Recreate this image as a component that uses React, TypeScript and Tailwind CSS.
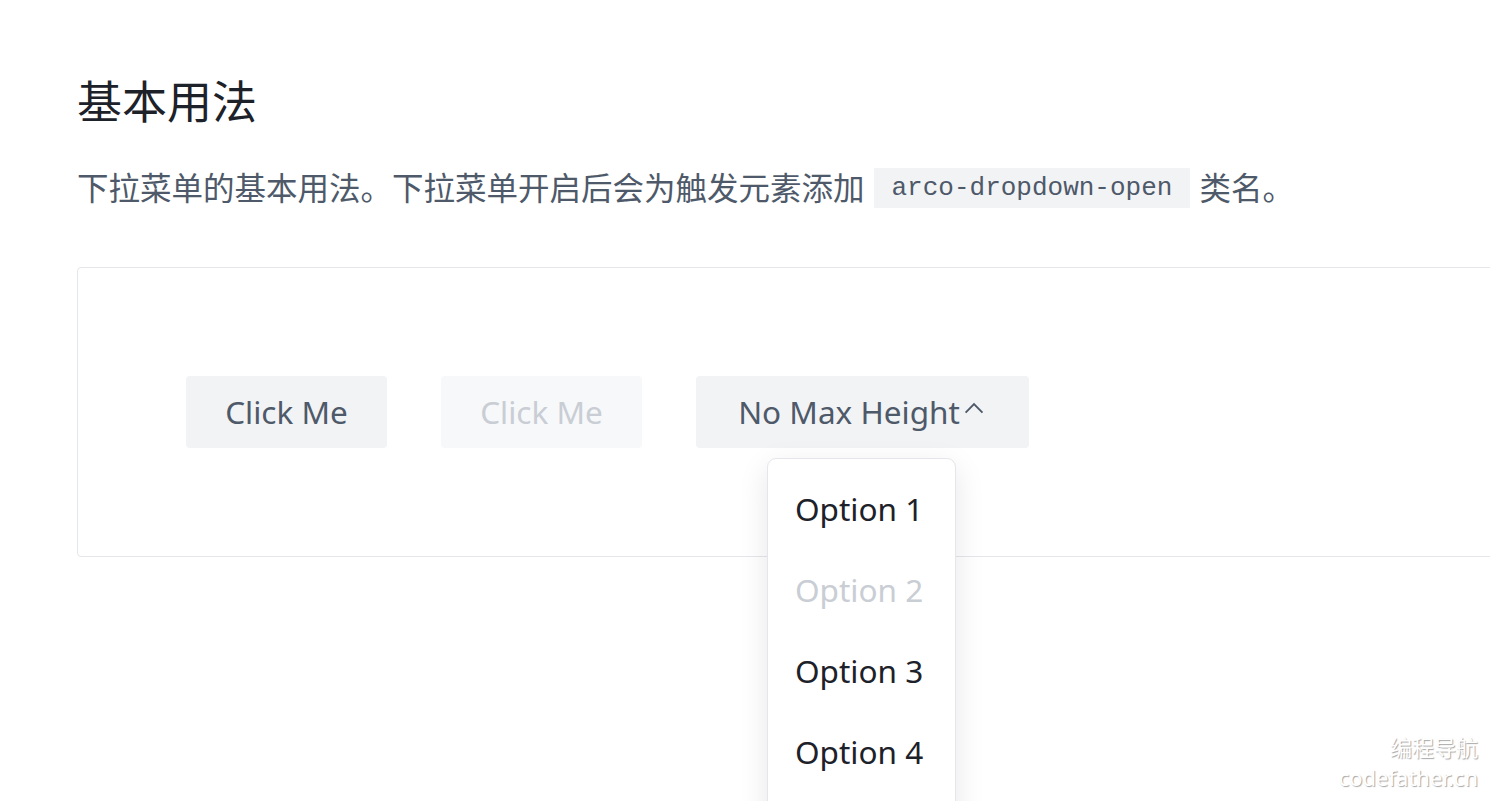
const ChevronUp = () => (
  <svg width="26" height="26" viewBox="0 0 48 48" fill="none" className="ml-[1px] mb-[6px]">
    <path d="M39.6 30.557 24.043 15 8.487 30.557" stroke="currentColor" strokeWidth="3.5" />
  </svg>
);

const options = [
  { label: 'Option 1', disabled: false },
  { label: 'Option 2', disabled: true },
  { label: 'Option 3', disabled: false },
  { label: 'Option 4', disabled: false },
];

const App = () => {
  return (
    <div
      className="relative h-[801px] w-full overflow-hidden bg-white pl-[77px]"
      style={{ fontFamily: '"Noto Sans", "Noto Sans CJK SC", sans-serif' }}
    >
      {/* Title */}
      <h2 className="pt-[70px] text-[45px] leading-[64px] font-normal text-[#1d2129]">基本用法</h2>
      <p className="mt-[34px] flex items-center text-[31.5px] leading-[40px] text-[#4e5969]">
        下拉菜单的基本用法。下拉菜单开启后会为触发元素添加
        <code
          className="mx-[9px] bg-[#f2f3f5] px-[18px] text-[26px] leading-[40px] text-[#4e5969]"
          style={{ fontFamily: '"Liberation Mono", monospace' }}
        >
          arco-dropdown-open
        </code>
        类名。
      </p>

      {/* Demo box */}
      <div className="mt-[59px] w-[1600px] rounded-tl-[4px] rounded-bl-[4px] border border-[#e5e6eb] px-[108px] py-[108px]">
        <div className="flex items-center gap-[54px]">
          <button className="h-[72px] w-[201px] rounded-[4px] bg-[#f2f3f5] text-[31.5px] text-[#4e5969]">
            Click Me
          </button>
          <button className="h-[72px] w-[201px] cursor-not-allowed rounded-[4px] bg-[#f7f8fa] text-[31.5px] text-[#c9cdd4]">
            Click Me
          </button>
          <div className="relative">
            <button className="flex h-[72px] w-[333px] items-center justify-center rounded-[4px] bg-[#f2f3f5] text-[31.5px] text-[#4e5969]">
              No Max Height
              <ChevronUp />
            </button>
            {/* Dropdown menu */}
            <div className="absolute left-[71px] top-[82px] z-10 w-[189px] rounded-[9px] border border-[#e5e6eb] bg-white pt-[9px] pb-[60px] shadow-[0_9px_30px_rgba(0,0,0,0.1)]">
              {options.map((o) => (
                <div
                  key={o.label}
                  className={`h-[81px] px-[27px] text-[31.5px] leading-[81px] ${o.disabled ? 'text-[#c9cdd4]' : 'text-[#1d2129]'}`}
                >
                  {o.label}
                </div>
              ))}
            </div>
          </div>
        </div>
      </div>

      {/* Watermark */}
      <div
        className="absolute right-[12px] top-[732px] text-right text-[22px] leading-[30px] text-white"
        style={{ textShadow: '1px 1px 1px rgba(0,0,0,0.35)' }}
      >
        <div>编程导航</div>
        <div>codefather.cn</div>
      </div>
    </div>
  );
};

export default App;
